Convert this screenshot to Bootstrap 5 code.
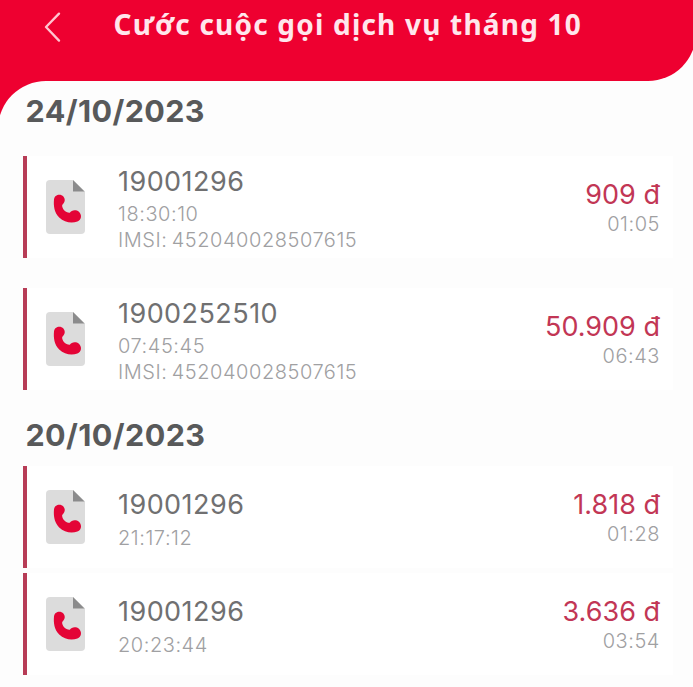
<!DOCTYPE html>
<html lang="vi">
<head>
<meta charset="utf-8">
<meta name="viewport" content="width=device-width, initial-scale=1">
<title>Cước cuộc gọi dịch vụ tháng 10</title>
<link rel="stylesheet" href="https://cdn.jsdelivr.net/npm/bootstrap@5.3.0/dist/css/bootstrap.min.css">
<style>
body { background: #fdfdfd; font-family: Inter, "Liberation Sans", sans-serif; }
.app { height: 687px; }
.topbar { height: 81px; margin-right: -3px; background: #ee0030; border-bottom-right-radius: 48px; padding: 6px 0 0 43px; }
.back { width: 18px; height: 30px; margin: 6px 0 0 1px; }
.title { margin-left: 51.5px; font: 700 28px/36px "Noto Sans", sans-serif; color: #ffe6ec; letter-spacing: 1.2px; }
.stage { background: linear-gradient(#ee0030, #ee0030) 0 0 / 60px 60px no-repeat; }
.panel { min-height: 606px; margin-left: -2px; padding: 0 20px 0 25px; background: #fdfdfd; border-top-left-radius: 48px; }
.day { font-size: 30.5px; line-height: 38px; font-weight: 700; color: #58595a; letter-spacing: .4px; padding-left: 2.5px; }
.day-first { padding-top: 11px; margin-bottom: 25.5px; }
.day-next { padding-top: 26px; margin-bottom: 12.5px; }
.call { height: 102px; background: #fff; border-left: 4px solid #b73c56; padding: 0 13px 0 19px; }
.call + .call { margin-top: 30px; }
.tight .call + .call { margin-top: 5px; }
.file { width: 39px; height: 54px; }
.info { margin-left: 33px; padding-top: 3.5px; }
.num { font-size: 27px; line-height: 36px; margin-bottom: 1.5px; color: #707071; letter-spacing: .45px; }
.meta { font-size: 20px; line-height: 26px; font-weight: 300; color: #a0a0a2; letter-spacing: .55px; word-spacing: -2px; }
.cost { font-size: 27px; line-height: 34px; color: #c23655; padding-top: 1px; margin-bottom: -1px; }
</style>
<script src="https://cdn.jsdelivr.net/npm/bootstrap@5.3.0/dist/js/bootstrap.bundle.min.js"></script>
</head>
<body>
<svg class="d-none" xmlns="http://www.w3.org/2000/svg">
  <symbol id="file" viewBox="0 0 39 54">
    <path d="M4 0H27L39 11.5V50a4 4 0 0 1-4 4H4a4 4 0 0 1-4-4V4a4 4 0 0 1 4-4z" fill="#dcdcdc"/>
    <path d="M27 0L38.5 11.5H27z" fill="#8b8b8c"/>
    <path d="M8 19.5C8.4 14.3 14.7 13.4 17.4 16.4C19.8 19.6 18.8 22.4 16.2 25C15.6 28.4 19.7 33 23.8 32.8C25.4 30 30.2 29.5 32.9 31.8C36.2 35 35.6 40 31.4 41.6C26 43.4 18.4 42.8 13.2 37.6C8.2 32.4 7.4 25.6 8 19.5z" fill="#e40436"/>
  </symbol>
</svg>
<div class="app overflow-hidden">
  <header class="topbar d-flex align-items-start">
    <svg class="back" viewBox="0 0 18 30" fill="none" stroke="#ffc4d0" stroke-width="2.3" stroke-linecap="round" stroke-linejoin="round"><path d="M15 1.6L2 15L15 28.6"/></svg>
    <h1 class="title mb-0 text-nowrap">Cước cuộc gọi dịch vụ tháng 10</h1>
  </header>
  <div class="stage">
    <main class="panel">
      <h2 class="day day-first">24/10/2023</h2>
      <section>
        <article class="call d-flex align-items-center">
          <svg class="file flex-shrink-0"><use href="#file"/></svg>
          <div class="info"><div class="num">19001296</div><div class="meta">18:30:10</div><div class="meta">IMSI: 452040028507615</div></div>
          <div class="ms-auto text-end"><div class="cost">909 đ</div><div class="meta">01:05</div></div>
        </article>
        <article class="call d-flex align-items-center">
          <svg class="file flex-shrink-0"><use href="#file"/></svg>
          <div class="info"><div class="num">1900252510</div><div class="meta">07:45:45</div><div class="meta">IMSI: 452040028507615</div></div>
          <div class="ms-auto text-end"><div class="cost">50.909 đ</div><div class="meta">06:43</div></div>
        </article>
      </section>
      <h2 class="day day-next">20/10/2023</h2>
      <section class="tight">
        <article class="call d-flex align-items-center">
          <svg class="file flex-shrink-0"><use href="#file"/></svg>
          <div class="info"><div class="num">19001296</div><div class="meta">21:17:12</div></div>
          <div class="ms-auto text-end"><div class="cost">1.818 đ</div><div class="meta">01:28</div></div>
        </article>
        <article class="call d-flex align-items-center">
          <svg class="file flex-shrink-0"><use href="#file"/></svg>
          <div class="info"><div class="num">19001296</div><div class="meta">20:23:44</div></div>
          <div class="ms-auto text-end"><div class="cost">3.636 đ</div><div class="meta">03:54</div></div>
        </article>
      </section>
    </main>
  </div>
</div>
</body>
</html>
